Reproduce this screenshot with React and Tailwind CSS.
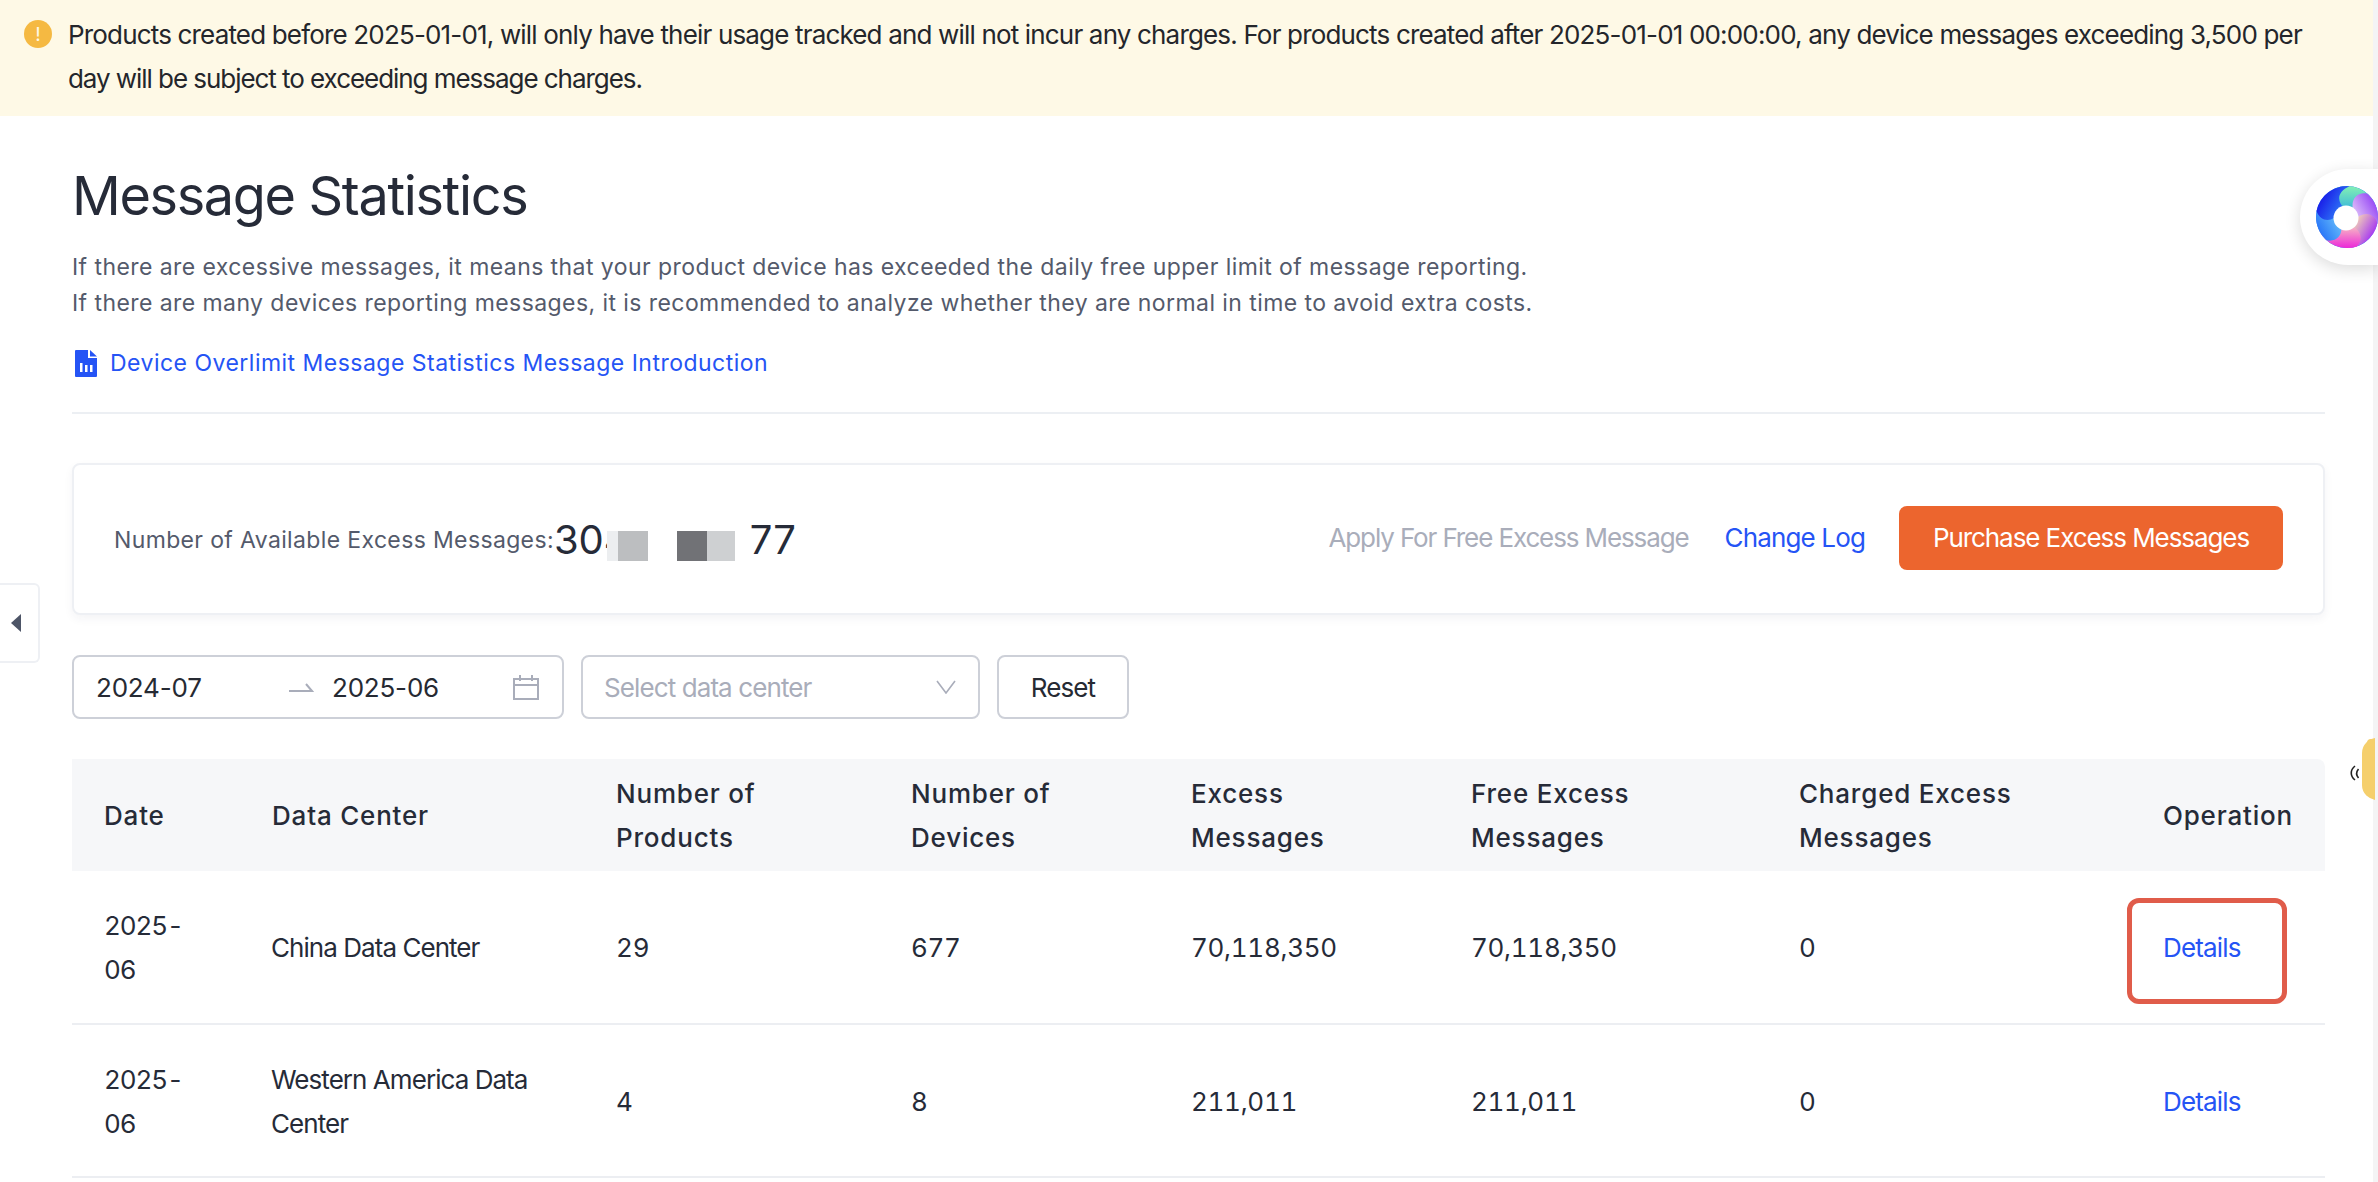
import React from "react";

function Watermarks() {
  const items = [];
  for (let i = -6; i <= 6; i++) {
    for (let j = -2; j <= 6; j++) {
      const x = 1538 + i * 420 + j * 75;
      const y = 223 + i * 60 + j * 185;
      if (x > -150 && x < 2500 && y > -60 && y < 1250) items.push([x, y]);
    }
  }
  return (
    <div className="absolute inset-0 z-10 overflow-hidden pointer-events-none">
      {items.map(([x, y]) => (
        <span
          key={x + "-" + y}
          className="absolute whitespace-nowrap text-[30px] leading-none -rotate-[21deg] -translate-x-1/2 -translate-y-1/2 text-black/[0.022] font-['Inter','Noto_Sans_CJK_SC',sans-serif]"
          style={{ left: x, top: y }}
        >
          涂鸦智能-6453
        </span>
      ))}
    </div>
  );
}

const petals = [
  { id: "p0", a: "#36b4dc", b: "#84f0b4" },
  { id: "p1", a: "#e4c8fa", b: "#9a4df5" },
  { id: "p2", a: "#fbe2b0", b: "#a83cf0" },
  { id: "p3", a: "#f8cfc0", b: "#ec28d8" },
  { id: "p4", a: "#6cc4fa", b: "#2a78f8" },
  { id: "p5", a: "#2f7cf8", b: "#1a20e8" },
];

function Swirl() {
  return (
    <svg width="64" height="64" viewBox="-32 -32 64 64" className="block">
      <defs>
        {petals.map((p) => (
          <linearGradient key={p.id} id={p.id} x1="0.5" y1="1" x2="0.5" y2="0">
            <stop offset="0" stopColor={p.a} />
            <stop offset="1" stopColor={p.b} />
          </linearGradient>
        ))}
      </defs>
      <circle r="31" fill="#2a78f8" />
      {petals.map((p, k) => (
        <path
          key={p.id}
          transform={`rotate(${k * 60})`}
          d="M0 -8 C-12 -10 -18 -20 -10 -29.4 A31 31 0 0 1 28 -13 C16 -22 8 -16 6 -6 Z"
          fill={`url(#${p.id})`}
        />
      ))}
      <circle cx="-1" cy="1" r="12.5" fill="#fff" />
    </svg>
  );
}

const headers = [
  ["Date", "w-[168px]"],
  ["Data Center", "w-[344px]"],
  [<>Number of<br />Products</>, "w-[295px]"],
  [<>Number of<br />Devices</>, "w-[280px]"],
  [<>Excess<br />Messages</>, "w-[280px]"],
  [<>Free Excess<br />Messages</>, "w-[328px]"],
  [<>Charged Excess<br />Messages</>, "w-[364px]"],
  ["Operation", "w-[194px]"],
];

const rows = [
  ["2025-06", "China Data Center", "29", "677", "70,118,350", "70,118,350", "0"],
  ["2025-06", "Western America Data Center", "4", "8", "211,011", "211,011", "0"],
];

const cellClass = [
  "pl-[32px] pr-[40px] pt-[2px] tabular-nums tracking-[-1.1px] text-[#262b38]",
  "pl-[31px] pr-[32px] pt-[2px] tracking-[-0.95px] text-[#262b38]",
  "pl-[32px] pr-[32px] pt-[2px] tabular-nums tracking-[0px] text-[#262b38]",
  "pl-[32px] pr-[32px] pt-[2px] tabular-nums tracking-[-0.4px] text-[#262b38]",
  "pl-[32px] pr-[32px] pt-[2px] tabular-nums tracking-[-0.3px] text-[#262b38]",
  "pl-[32px] pr-[32px] pt-[2px] tabular-nums tracking-[-0.3px] text-[#262b38]",
  "pl-[32px] pr-[32px] pt-[2px] tabular-nums tracking-[0px] text-[#262b38]",
];

export default function App() {
  return (
    <div className="relative w-[2378px] h-[1182px] overflow-hidden bg-white font-['Inter',sans-serif] text-[#262a33]">
      <div className="flex h-[116px] bg-[#fef9e6] pl-6 pr-[40px] pt-[13px] gap-[16px]">
        <div className="flex h-[28px] w-[28px] shrink-0 mt-[7px] items-center justify-center rounded-full bg-[#f5b942] text-[19px] leading-none text-[#fef9e6]">
          !
        </div>
        <p className="text-[26px] leading-[44px] text-[#24262b]">
          <span className="tracking-[-0.83px]">
            Products created before 2025-01-01, will only have their usage tracked and will not incur any charges. For products created after 2025-01-01 00:00:00, any device messages exceeding 3,500 per
          </span>
          <br />
          <span className="tracking-[-1.05px]">day will be subject to exceeding message charges.</span>
        </p>
      </div>

      <div className="pl-[72px] pr-[53px]">
        <h1 className="mt-[49px] text-[54px] leading-[62px] font-normal tracking-[-1.35px] text-[#262b38]">Message Statistics</h1>
        <p className="mt-[22px] text-[23px] leading-[36px] tracking-[0.43px] text-[#545a6b]">
          If there are excessive messages, it means that your product device has exceeded the daily free upper limit of message reporting.
          <br />
          If there are many devices reporting messages, it is recommended to analyze whether they are normal in time to avoid extra costs.
        </p>
        <a className="mt-[24px] flex items-center gap-[13px] h-[36px] pl-[3px] text-[23px] leading-[36px] tracking-[0.48px] text-[#2554f5]">
          <svg width="22" height="27" viewBox="0 0 22 27" className="block">
            <path d="M1 0 H13 V8 H22 V26 a1 1 0 0 1 -1 1 H1 a1 1 0 0 1 -1 -1 V1 a1 1 0 0 1 1 -1 Z" fill="#2554f5" />
            <path d="M15 0 L22 6.5 H15 Z" fill="#2554f5" />
            <rect x="5" y="13" width="2.5" height="9" fill="#fff" />
            <rect x="10" y="15" width="2.5" height="7" fill="#fff" />
            <rect x="15" y="15" width="2.5" height="7" fill="#fff" />
          </svg>
          Device Overlimit Message Statistics Message Introduction
        </a>
        <div className="mt-[31px] h-[2px] bg-[#eceff3]" />

        <div className="mt-[49px] flex h-[152px] items-center rounded-lg border-2 border-[#eef0f4] bg-white pl-[40px] pr-[40px] shadow-[0_4px_10px_rgba(30,40,70,0.05)]">
          <span className="mt-[2px] text-[23px] tracking-[0.36px] text-[#545a6b]">Number of Available Excess Messages:</span>
          <span className="mt-[2px] flex items-center text-[40px] leading-none text-[#262b38]">
            30
            <span className="w-[3px] overflow-hidden">4</span>
            <span className="h-[30px] w-[11px] bg-[#eceef0] mt-[12px]" />
            <span className="h-[30px] w-[30px] bg-[#bcbec0] mt-[12px]" />
            <span className="ml-[29px] h-[30px] w-[30px] bg-[#717276] mt-[12px]" />
            <span className="h-[30px] w-[28px] bg-[#ced0d2] mt-[12px]" />
            <span className="ml-[15px]">77</span>
          </span>
          <span className="mb-[4px] ml-auto text-[26px] tracking-[-1.12px] text-[#a9adba]">Apply For Free Excess Message</span>
          <a className="mb-[4px] ml-[36px] text-[26px] tracking-[-0.85px] text-[#2554f5]">Change Log</a>
          <button className="mb-[2px] ml-[34px] h-[64px] w-[384px] rounded-lg bg-[#ec652e] pb-[2px] text-[26px] tracking-[-1.07px] text-white">
            Purchase Excess Messages
          </button>
        </div>

        <div className="mt-[40px] flex gap-[17px]">
          <div className="flex h-[64px] w-[492px] items-center rounded-lg border-2 border-[#cdd0d8] pl-[22px] pr-[22px] text-[26px] tracking-[-0.2px] text-[#262a33]">
            <span className="w-[192px]">2024-07</span>
            <svg width="26" height="12" viewBox="0 0 26 12" className="mr-[18px]">
              <path d="M1 10 H24 L18 3" fill="none" stroke="#a9adba" strokeWidth="2" />
            </svg>
            <span>2025-06</span>
            <svg width="28" height="28" viewBox="0 0 28 28" className="ml-auto">
              <path d="M2 6 H26 V26 H2 Z M2 12 H26 M8 2 V8 M20 2 V8" fill="none" stroke="#a9adba" strokeWidth="2" />
            </svg>
          </div>
          <div className="flex h-[64px] w-[399px] items-center justify-between rounded-lg border-2 border-[#cdd0d8] pl-[21px] pr-[22px] text-[26px] tracking-[-0.9px] text-[#a9adba]">
            <span>Select data center</span>
            <svg width="20" height="14" viewBox="0 0 20 14">
              <path d="M1 1 L10 13 L19 1" fill="none" stroke="#a9adba" strokeWidth="1.6" />
            </svg>
          </div>
          <button className="h-[64px] w-[132px] rounded-lg border-2 border-[#cdd0d8] text-[26px] tracking-[-0.9px] text-[#262a33]">
            Reset
          </button>
        </div>

        <table className="mt-[40px] w-[2253px] table-fixed border-collapse text-[26px] leading-[44px]">
          <thead>
            <tr className="h-[112px] bg-[#f6f7f9]">
              {headers.map(([h, w], i) => (
                <th
                  key={i}
                  className={`${w} pl-[32px] pr-0 pt-[2px] text-left font-medium tracking-[0.8px] text-[#262b38] ${i === 7 ? "rounded-tr-lg" : ""}`}
                >
                  {h}
                </th>
              ))}
            </tr>
          </thead>
          <tbody>
            {rows.map((r, i) => (
              <tr key={i} className="h-[153px] border-b-2 border-[#eceef2]">
                {r.map((c, j) => (
                  <td key={j} className={cellClass[j]}>
                    {c}
                  </td>
                ))}
                <td className="pl-[32px] pt-[2px] tracking-[-0.85px] text-[#2554f5]"><a>Details</a></td>
              </tr>
            ))}
          </tbody>
        </table>
      </div>

      <div className="absolute left-[2127px] top-[898px] h-[106px] w-[160px] rounded-[12px] border-[5px] border-[#e05c4a]" />

      <div className="absolute left-0 top-[583px] flex h-[80px] w-[40px] items-center rounded-r-md border-2 border-l-0 border-[#eef0f4] bg-white pl-[11px]">
        <svg width="10" height="18" viewBox="0 0 10 18"><path d="M10 0 V18 L0 9 Z" fill="#4d5567" /></svg>
      </div>

      <div className="absolute right-0 top-0 h-full w-[5px] bg-[#f4f4f5]" />

      <svg width="10" height="16" viewBox="0 0 10 16" className="absolute left-[2350px] top-[765px]">
        <path d="M5 1 C0 5 0 11 5 15 M8.5 4 C6 7 6 10 8.5 13" fill="none" stroke="#222" strokeWidth="1.6" />
      </svg>
      <div className="absolute left-[2362px] top-[736px] h-[66px] w-[13px] overflow-hidden">
        <div className="mt-[2px] h-[62px] w-[30px] rounded-full bg-[#f5cf6c]" />
      </div>
      <div className="absolute left-[2367px] top-[739px] h-[8px] w-[8px] rounded-full bg-[#f5cf6c]" />

      <div className="absolute left-[2300px] top-[169px] flex h-[96px] w-[78px] items-center overflow-hidden rounded-l-[48px] bg-white pl-[15px] shadow-[0_4px_16px_rgba(0,0,0,0.14)]">
        <div className="shrink-0"><Swirl /></div>
      </div>

      <Watermarks />
    </div>
  );
}
